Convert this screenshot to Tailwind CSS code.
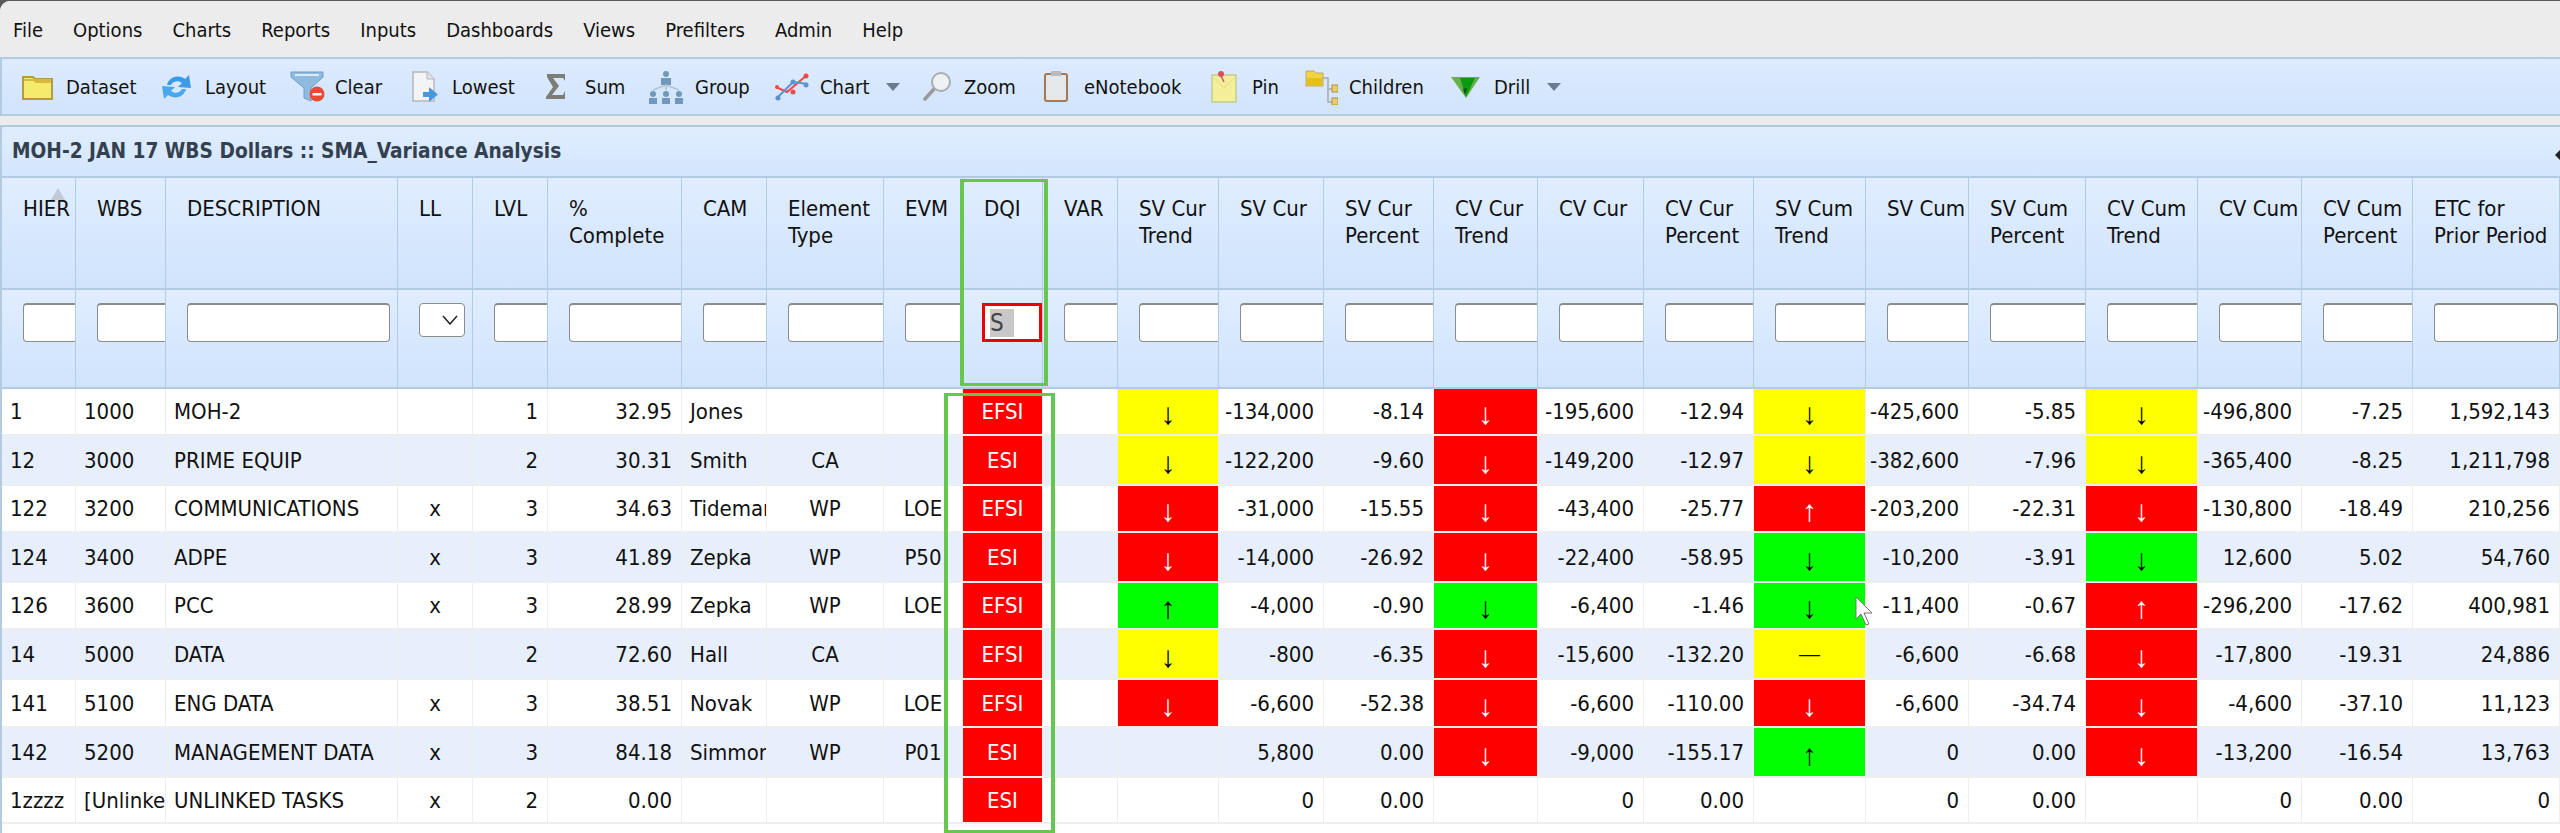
<!DOCTYPE html>
<html lang="en">
<head>
  <meta charset="UTF-8">
  <title>MOH-2 JAN 17 WBS Dollars</title>
  <script src="https://cdn.jsdelivr.net/npm/@tailwindcss/browser@4"></script>
</head>
<body class="bg-white">
<div class="relative w-[2560px] h-[833px] overflow-hidden bg-[#5a5a5a] pt-px font-['DejaVu_Sans_Condensed','DejaVu_Sans',sans-serif] text-[20px] text-[#111]">
  <div class="h-[832px] rounded-tl-[10px] overflow-hidden bg-white flex flex-col">

    <!-- menu -->
    <div class="h-[56px] shrink-0 bg-[#ececec] flex items-center pl-[13px] gap-[30px] pt-[2px]">
      <span>File</span><span>Options</span><span>Charts</span><span>Reports</span><span>Inputs</span><span>Dashboards</span><span>Views</span><span>Prefilters</span><span>Admin</span><span>Help</span>
    </div>

    <!-- toolbar -->
    <div class="h-[59px] shrink-0 border-y-2 border-l-2 border-[#b3cbe0] bg-linear-to-b from-[#deebff] to-[#d0e4fc] flex items-center pl-[20px]">
      <div class="w-[139px] flex items-center gap-[13px]">
        <svg class="w-[31px] h-[26px]" viewBox="0 0 31 26"><path d="M1 3h10l2 2h17v20H1z" fill="#f6ea6c" stroke="#b39a45" stroke-width="2"/><path d="M2 5h27v4H14l-3-2H2z" fill="#d8b93e"/></svg>
        <span>Dataset</span>
      </div>
      <div class="w-[129px] flex items-center gap-[13px]">
        <svg class="w-[31px] h-[28px]" viewBox="0 0 31 28"><path d="M6 12C8 4 17 1 24 6l4-4 2 13-13-1 4-4c-4-3-9-2-11 2z" fill="#3d9ae8"/><path d="M25 16c-2 8-11 11-18 6l-4 4-2-13 13 1-4 4c4 3 9 2 11-2z" fill="#4aa8ee"/></svg>
        <span>Layout</span>
      </div>
      <div class="w-[122px] flex items-center gap-[10px]">
        <svg class="w-[35px] h-[33px]" viewBox="0 0 35 33"><path d="M1 2h32v5L21 18v13l-7-3V18L1 7z" fill="#8fbbe0" stroke="#6f9cc2"/><path d="M5 4h24v2H5z" fill="#dcecfa"/><circle cx="27" cy="24" r="7.5" fill="#e84a32"/><path d="M22.5 23h9v2.500h-9z" fill="#fff"/></svg>
        <span>Clear</span>
      </div>
      <div class="w-[134px] flex items-center gap-[14px]">
        <svg class="w-[26px] h-[32px]" viewBox="0 0 26 32"><path d="M1 1h14l7 7v22H1z" fill="#f2f4f6" stroke="#b4b8bc" stroke-width="1.500"/><path d="M15 1v7h7" fill="#dfe3e6" stroke="#b4b8bc"/><path d="M11 21h6v-5l9 7.500-9 7.500v-5h-6z" fill="#4a98dc"/></svg>
        <span>Lowest</span>
      </div>
      <div class="w-[103px] flex items-center gap-[19px]">
        <svg class="w-[20px] h-[25px]" viewBox="0 0 20 25"><path d="M1 0h18v7l-2-3H7l6 8-7 9h11l2-4v8H0v-2l7-10L1 3z" fill="#7c7c78"/></svg>
        <span>Sum</span>
      </div>
      <div class="w-[126px] flex items-center gap-[12px]">
        <svg class="w-[34px] h-[34px]" viewBox="0 0 34 34"><g fill="#6f98ba"><circle cx="17" cy="4" r="3"/><path d="M12 8h10v7H12z"/><circle cx="4" cy="24" r="3"/><path d="M0 28h8v6H0z"/><circle cx="17" cy="24" r="3"/><path d="M13 28h8v6h-8z"/><circle cx="30" cy="24" r="3"/><path d="M26 28h8v6h-8z"/></g><path d="M17 15v5M4 20l13-5 13 5" stroke="#b4c2cc" stroke-width="1.500" fill="none"/></svg>
        <span>Group</span>
      </div>
      <div class="w-[148px] flex items-center">
        <svg class="w-[34px] h-[28px] mr-[11px]" viewBox="0 0 34 28"><path d="M1 14l11 5L32 2" stroke="#ee4a4a" stroke-width="2" fill="none"/><path d="M1 26l17-17 15 2" stroke="#5c94d0" stroke-width="2" fill="none"/><g fill="#ee4a4a"><circle cx="2" cy="14" r="2"/><circle cx="18" cy="19" r="2.500"/><circle cx="31" cy="3" r="2.500"/></g><g fill="#5c94d0"><circle cx="3" cy="25" r="2.500"/><circle cx="18" cy="9" r="2.500"/><circle cx="31" cy="12" r="2.500"/></g></svg>
        <span>Chart</span>
        <svg class="w-[14px] h-[8px] ml-[17px]" viewBox="0 0 14 8"><path d="M0 0h14L7 8z" fill="#6a7c90"/></svg>
      </div>
      <div class="w-[121px] flex items-center gap-[12px]">
        <svg class="w-[29px] h-[29px]" viewBox="0 0 29 29"><path d="M11 17L2 27" stroke="#9a9a9a" stroke-width="3.500" stroke-linecap="round"/><circle cx="18" cy="10" r="9" fill="#eef1f3" stroke="#a9adb0" stroke-width="2"/></svg>
        <span>Zoom</span>
      </div>
      <div class="w-[167px] flex items-center gap-[16px]">
        <svg class="w-[24px] h-[31px]" viewBox="0 0 24 31"><rect x="1" y="3" width="22" height="27" rx="2" fill="#e4e8ea" stroke="#a87650" stroke-width="2"/><rect x="7" y="0" width="10" height="5" rx="1" fill="#b8bcc0"/></svg>
        <span>eNotebook</span>
      </div>
      <div class="w-[94px] flex items-center gap-[15px]">
        <svg class="w-[26px] h-[32px]" viewBox="0 0 26 32"><path d="M1 4h24v27H1z" fill="#f5ef9c" stroke="#c2cc90" stroke-width="1.500"/><path d="M2 6l11 11L24 6" stroke="#ebe384" fill="none" stroke-width="1.500"/><circle cx="10" cy="3" r="3" fill="#e04c5a"/><path d="M10 5l3 6" stroke="#c06068" stroke-width="1.500"/></svg>
        <span>Pin</span>
      </div>
      <div class="w-[146px] flex items-center gap-[11px]">
        <svg class="w-[33px] h-[36px]" viewBox="0 0 33 36"><path d="M1 2h8l2 2h7v13H1z" fill="#efd342" stroke="#c0a860"/><path d="M2 9h15v7H2z" fill="#e4c018"/><path d="M18 9h5v24h5M23 20h5" stroke="#a8a8a8" stroke-width="1.500" fill="none"/><rect x="27" y="16" width="6" height="7" fill="#e8cf60" stroke="#b08e4e"/><rect x="27" y="29" width="6" height="7" fill="#e8cf60" stroke="#b08e4e"/></svg>
        <span>Children</span>
      </div>
      <div class="flex items-center gap-[14px]">
        <svg class="w-[29px] h-[22px]" viewBox="0 0 29 22"><path d="M0 1h29L15 22z" fill="#6ab04a"/><path d="M9 2h15l-9 19z" fill="#0a9a10"/><path d="M12 13l4-1-2 7z" fill="#14501c"/></svg>
        <span>Drill</span>
        <svg class="w-[14px] h-[8px] ml-[3px]" viewBox="0 0 14 8"><path d="M0 0h14L7 8z" fill="#6a7c90"/></svg>
      </div>
    </div>

    <div class="h-[9px] shrink-0 bg-[#ececec]"></div>

    <!-- panel -->
    <div class="flex-1 border-l-2 border-[#b3cbe0]">
      <div class="h-[53px] border-y-2 border-[#b3cbe0] bg-linear-to-b from-[#e0edff] to-[#d3e6fd] flex items-center pl-[10px] font-bold text-[#33404f] text-[20.7px]">
        MOH-2 JAN 17 WBS Dollars :: SMA_Variance Analysis
      </div>
      <table id="grid" class="table-fixed border-separate border-spacing-0 w-[2558px] text-[22px]">
        <colgroup>
          <col class="w-[74px]"><col class="w-[90px]"><col class="w-[232px]"><col class="w-[75px]"><col class="w-[75px]"><col class="w-[134px]"><col class="w-[85px]"><col class="w-[117px]"><col class="w-[79px]"><col class="w-[80px]"><col class="w-[75px]"><col class="w-[101px]"><col class="w-[105px]"><col class="w-[110px]"><col class="w-[104px]"><col class="w-[106px]"><col class="w-[110px]"><col class="w-[112px]"><col class="w-[103px]"><col class="w-[117px]"><col class="w-[112px]"><col class="w-[104px]"><col class="w-[111px]"><col class="w-[147px]">
        </colgroup>
        <thead>
          <tr id="heads" class="h-[112px]"></tr>
          <tr id="filters" class="h-[99px]"></tr>
        </thead>
        <tbody id="rows"></tbody>
      </table>
    </div>
  </div>

  <!-- sort marker, pane arrow, highlight boxes, cursor -->
  <div class="absolute left-[51px] top-[188px] w-0 h-0 border-x-[7px] border-x-transparent border-b-[12px] border-b-[#b9c2cc]/80"></div>
  <div class="absolute left-[2555px] top-[150px] w-0 h-0 border-y-[5px] border-y-transparent border-r-[5px] border-r-[#222]"></div>
  <div class="absolute left-[960px] top-[179px] w-[88px] h-[207px] border-x-4 border-y-[3px] border-[#66c74e]"></div>
  <div class="absolute left-[944px] top-[393px] w-[111px] h-[440px] border-x-4 border-y-[3px] border-[#66c74e]"></div>
  <svg class="absolute left-[1855px] top-[596px] w-[20px] h-[30px]" viewBox="0 0 20 30"><path d="M1 1v22l5-5 5 11 3-1-5-11h8z" fill="#fff" stroke="#777" stroke-width="1"/></svg>
</div>

<script>
  const heads = ["HIER", "WBS", "DESCRIPTION", "LL", "LVL", "%<br>Complete", "CAM", "Element<br>Type", "EVM", "DQI", "VAR",
    "SV Cur<br>Trend", "SV Cur", "SV Cur<br>Percent", "CV Cur<br>Trend", "CV Cur", "CV Cur<br>Percent",
    "SV Cum<br>Trend", "SV Cum", "SV Cum<br>Percent", "CV Cum<br>Trend", "CV Cum", "CV Cum<br>Percent", "ETC for<br>Prior Period"];

  const headCell = "align-top pt-[17px] pl-[21px] text-left font-normal leading-[27px] whitespace-nowrap overflow-hidden border-r-[1.5px] border-b-2 border-[#b3cbe0] bg-linear-to-b from-[#e0edff] to-[#d0e4fc]";
  const filterCell = "align-top pt-[13px] pl-[21px] overflow-hidden border-r-[1.5px] border-b-2 border-[#b3cbe0] bg-linear-to-b from-[#e0edff] to-[#d0e4fc]";
  const box = "block h-[39px] bg-white rounded-[4px] border-[1.5px] border-t-2 border-[#8c8c8c]";

  document.getElementById("heads").innerHTML = heads.map(h => `<th class="${headCell}">${h}</th>`).join("");

  document.getElementById("filters").innerHTML = heads.map((h, i) => {
    if (i == 3) return `<td class="${filterCell}"><div class="flex items-center justify-end pr-[6px] w-[46px] h-[34px] bg-white rounded-[4px] border-[1.5px] border-[#8c8c8c]"><svg class="w-[16px] h-[10px]" viewBox="0 0 16 10"><path d="M1 1l7 8 7-8" fill="none" stroke="#222" stroke-width="1.500"/></svg></div></td>`;
    if (i == 9) return `<td class="${filterCell} !pl-[19px]"><div class="flex items-center w-[60px] h-[39px] bg-white border-[3px] border-[#ee0000] pl-[5px]"><span class="w-[24px] h-[28px] bg-[#c8c8c8] text-[#444] text-[24px] leading-[28px]">S</span></div></td>`;
    if (i == 2) return `<td class="${filterCell}"><input class="${box} w-[203px]"></td>`;
    if (i == 23) return `<td class="${filterCell}"><input class="${box} w-[124px]"></td>`;
    return `<td class="${filterCell}"><input class="${box} w-[200px]"></td>`;
  }).join("");

  // r/y/g + arrow is a trend cell, plain values are just text
  const data = [
    ["1", "1000", "MOH-2", "", "1", "32.95", "Jones", "", "", "EFSI", "", "y↓", "-134,000", "-8.14", "r↓", "-195,600", "-12.94", "y↓", "-425,600", "-5.85", "y↓", "-496,800", "-7.25", "1,592,143"],
    ["12", "3000", "PRIME EQUIP", "", "2", "30.31", "Smith", "CA", "", "ESI", "", "y↓", "-122,200", "-9.60", "r↓", "-149,200", "-12.97", "y↓", "-382,600", "-7.96", "y↓", "-365,400", "-8.25", "1,211,798"],
    ["122", "3200", "COMMUNICATIONS", "x", "3", "34.63", "Tideman", "WP", "LOE", "EFSI", "", "r↓", "-31,000", "-15.55", "r↓", "-43,400", "-25.77", "r↑", "-203,200", "-22.31", "r↓", "-130,800", "-18.49", "210,256"],
    ["124", "3400", "ADPE", "x", "3", "41.89", "Zepka", "WP", "P50", "ESI", "", "r↓", "-14,000", "-26.92", "r↓", "-22,400", "-58.95", "g↓", "-10,200", "-3.91", "g↓", "12,600", "5.02", "54,760"],
    ["126", "3600", "PCC", "x", "3", "28.99", "Zepka", "WP", "LOE", "EFSI", "", "g↑", "-4,000", "-0.90", "g↓", "-6,400", "-1.46", "g↓", "-11,400", "-0.67", "r↑", "-296,200", "-17.62", "400,981"],
    ["14", "5000", "DATA", "", "2", "72.60", "Hall", "CA", "", "EFSI", "", "y↓", "-800", "-6.35", "r↓", "-15,600", "-132.20", "y—", "-6,600", "-6.68", "r↓", "-17,800", "-19.31", "24,886"],
    ["141", "5100", "ENG DATA", "x", "3", "38.51", "Novak", "WP", "LOE", "EFSI", "", "r↓", "-6,600", "-52.38", "r↓", "-6,600", "-110.00", "r↓", "-6,600", "-34.74", "r↓", "-4,600", "-37.10", "11,123"],
    ["142", "5200", "MANAGEMENT DATA", "x", "3", "84.18", "Simmons", "WP", "P01", "ESI", "", "", "5,800", "0.00", "r↓", "-9,000", "-155.17", "g↑", "0", "0.00", "r↓", "-13,200", "-16.54", "13,763"],
    ["1zzzz", "[Unlinked]", "UNLINKED TASKS", "x", "2", "0.00", "", "", "", "ESI", "", "", "0", "0.00", "", "0", "0.00", "", "0", "0.00", "", "0", "0.00", "0"],
  ];
  const rowH = ["h-[47px]", "h-[50px]", "h-[47px]", "h-[50px]", "h-[47px]", "h-[50px]", "h-[48px]", "h-[50px]", "h-[46px]"];
  const tone = {
    r: "bg-[#ff0000] text-white",
    y: "bg-[#ffff00] text-black",
    g: "bg-[#00ff00] text-black",
  };
  const base = "border-r border-b-2 border-[#eceef0] overflow-hidden whitespace-nowrap p-0 ";

  document.getElementById("rows").innerHTML = data.map((row, r) => {
    const tds = row.map((v, c) => {
      if (c == 9) return `<td class="${base} text-center bg-[#ff0000] text-white">${v}</td>`;
      if (v[1] == "—") return `<td class="${base} text-center ${tone[v[0]]} font-['Liberation_Sans',sans-serif] text-[21px]">—</td>`;
      if (/^[ryg][↓↑]$/.test(v)) return `<td class="${base} text-center ${tone[v[0]]} font-['Liberation_Sans',sans-serif] text-[30px] leading-none pt-[5px]">${v[1]}</td>`;
      if (c == 3 || c == 7 || c == 8) return `<td class="${base} text-center">${v}</td>`;
      if (c == 0 || c == 1 || c == 2 || c == 6) return `<td class="${base} text-left pl-[8px]">${v}</td>`;
      return `<td class="${base} text-right pr-[9px]">${v}</td>`;
    }).join("");
    return `<tr class="${rowH[r]} ${r % 2 ? "bg-[#e8effc]" : "bg-white"}">${tds}</tr>`;
  }).join("");
</script>
</body>
</html>
